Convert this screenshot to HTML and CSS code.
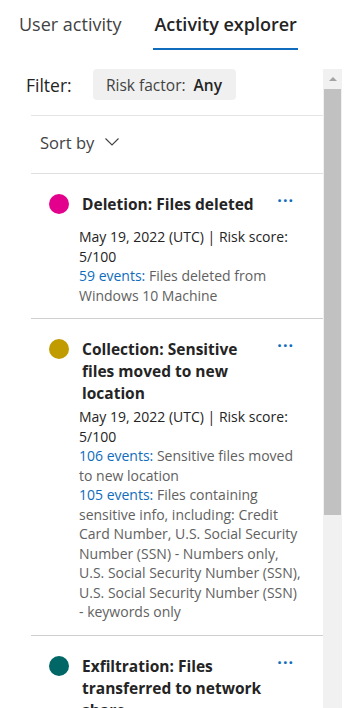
FILE: index.html
```html
<!DOCTYPE html>
<html>
<head>
<meta charset="utf-8">
<link rel="stylesheet" href="styles.css">
</head>
<body>
<div class="tabs">
  <div class="tab">User activity</div>
  <div class="tab tab-active">Activity explorer</div>
</div>
<div class="main">
  <div class="content">
    <div class="filter-row">
      <span class="filter-label">Filter:</span>
      <span class="chip">Risk factor: <b>Any</b></span>
    </div>
    <div class="list">
      <div class="sort-row">
        <span>Sort by</span>
        <svg class="chevron" width="14" height="8" viewBox="0 0 14 8"><path d="M0.5 0.5 L7 7 L13.5 0.5" fill="none" stroke="#424242" stroke-width="1.1"/></svg>
      </div>
      <div class="item">
        <span class="dot dot-pink"></span>
        <div class="item-body">
          <div class="title-row">
            <div class="title">Deletion: Files deleted</div>
            <span class="more">···</span>
          </div>
          <div class="details">
            <div class="meta">May 19, 2022 (UTC) | Risk score: 5/100</div>
            <div class="desc"><span class="link">59 events:</span> Files deleted from Windows 10 Machine</div>
          </div>
        </div>
      </div>
      <div class="item">
        <span class="dot dot-gold"></span>
        <div class="item-body">
          <div class="title-row">
            <div class="title">Collection: Sensitive files moved to new location</div>
            <span class="more">···</span>
          </div>
          <div class="details">
            <div class="meta">May 19, 2022 (UTC) | Risk score: 5/100</div>
            <div class="desc"><span class="link">106 events:</span> Sensitive files moved to new location</div>
            <div class="desc"><span class="link">105 events:</span> Files containing sensitive info, including: Credit Card Number, U.S. Social Security Number (SSN) - Numbers only, U.S. Social Security Number (SSN), U.S. Social Security Number (SSN) - keywords only</div>
          </div>
        </div>
      </div>
      <div class="item">
        <span class="dot dot-teal"></span>
        <div class="item-body">
          <div class="title-row">
            <div class="title">Exfiltration: Files transferred to network share</div>
            <span class="more">···</span>
          </div>
        </div>
      </div>
    </div>
  </div>
  <div class="scrollbar">
    <div class="sb-arrow"><span class="sb-tri"></span></div>
    <div class="sb-thumb"></div>
  </div>
</div>
</body>
</html>
```
FILE: styles.css
```css
html, body {
  margin: 0;
  padding: 0;
  background: #ffffff;
  height: 708px;
  overflow: hidden;
}
body {
  font-family: "Open Sans", "Noto Sans", sans-serif;
  color: #242424;
}
.tabs {
  display: flex;
  gap: 33px;
  padding-left: 19px;
  height: 69px;
}
.tab {
  font-size: 18px;
  color: #424242;
  padding-top: 12px;
  line-height: 24px;
  box-sizing: border-box;
}
.tab-active {
  color: #242424;
  font-weight: 600;
  border-bottom: 2px solid #0f6cbd;
  height: 50px;
  padding-left: 1px;
  padding-right: 1px;
  margin-left: -1px;
}
.main {
  display: flex;
  height: 639px;
  padding-right: 4px;
}
.content {
  width: 323px;
  flex: none;
  overflow: hidden;
}
.scrollbar {
  width: 19px;
  background: #f1f1f1;
  display: flex;
  flex-direction: column;
  align-items: center;
}
.sb-arrow {
  height: 20px;
  width: 19px;
  display: flex;
  align-items: center;
  justify-content: center;
}
.sb-tri {
  width: 0;
  height: 0;
  border-left: 4px solid transparent;
  border-right: 4px solid transparent;
  border-bottom: 4px solid #a3a3a3;
}
.sb-thumb {
  width: 17px;
  height: 426px;
  background: #c1c1c1;
}
.filter-row {
  display: flex;
  align-items: center;
  height: 31px;
  padding-left: 26px;
  margin-bottom: 15px;
}
.filter-label {
  font-size: 17.5px;
  width: 67px;
  flex: none;
  padding-top: 1px;
}
.chip {
  background: #f0f0f0;
  border-radius: 4px;
  height: 31px;
  box-sizing: border-box;
  padding: 0 14px 0 13px;
  display: flex;
  align-items: center;
  gap: 4px;
  font-size: 15.5px;
  color: #424242;
  white-space: pre;
}
.chip b {
  font-weight: 600;
  color: #242424;
}
.list {
  margin-left: 31px;
  border-top: 1px solid #e5e5e5;
}
.sort-row {
  height: 58px;
  box-sizing: border-box;
  padding-bottom: 4px;
  display: flex;
  align-items: center;
  gap: 11px;
  padding-left: 9px;
  font-size: 16.5px;
  color: #424242;
  border-bottom: 1px solid #e0e0e0;
}
.chevron {
  margin-top: -1px;
}
.item {
  display: flex;
  padding: 19px 0 13px 18px;
  border-bottom: 1px solid #cfcfcf;
}
.dot {
  width: 20px;
  height: 20px;
  border-radius: 50%;
  flex: none;
  margin-top: 1px;
}
.dot-pink { background: #e3008c; }
.dot-gold { background: #c19c00; }
.dot-teal { background: #006666; }
.item-body {
  margin-left: 10px;
  width: 222px;
}
.title-row {
  display: flex;
  align-items: flex-start;
  min-height: 31px;
}
.title {
  font-size: 15.5px;
  font-weight: 700;
  line-height: 22px;
  padding-left: 3px;
  flex: 1;
  padding-right: 10px;
}
.more {
  flex: none;
  margin-right: 7px;
  color: #0f6cbd;
  font-size: 16px;
  line-height: 14px;
  font-weight: 700;
  letter-spacing: 1px;
}
.details {
  margin-top: 3px;
  font-size: 14px;
  line-height: 19.5px;
}
.meta {
  color: #242424;
}
.desc {
  color: #616161;
}
.link {
  color: #0f6cbd;
}
```
